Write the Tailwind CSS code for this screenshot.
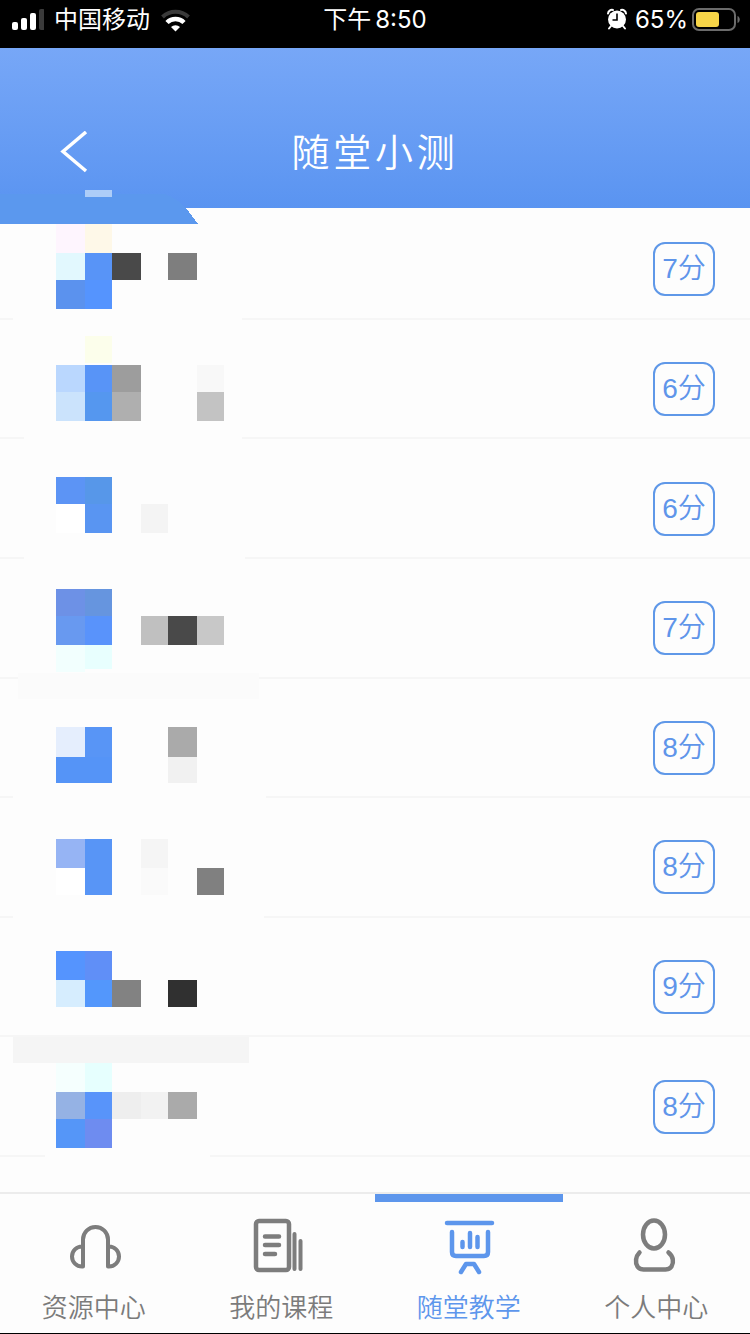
<!doctype html>
<html lang="zh-CN">

<head>
    <meta charset="utf-8">
    <meta name="viewport" content="width=device-width, initial-scale=1">
    <title>随堂小测</title>
    <script src="https://cdn.jsdelivr.net/npm/@tailwindcss/browser@4"></script>
</head>
<body class="min-h-screen flex flex-col bg-[#fdfdfd] border-b border-black font-['Liberation_Sans','Noto_Sans_CJK_SC',sans-serif] antialiased">

    <!-- status bar -->
    <div class="h-12 grid grid-cols-3 items-start bg-black text-white text-2xl leading-10 font-normal font-['Inter','Noto_Sans_CJK_SC',sans-serif]">
        <div class="flex items-center pl-3">
            <svg class="w-8 h-10 mr-2.5" viewBox="0 0 32 40" fill="#fff" aria-hidden="true">
                <rect x="0" y="22" width="6" height="8" rx="2"/>
                <rect x="9" y="18" width="6" height="12" rx="2"/>
                <rect x="18" y="13" width="6" height="17" rx="2"/>
                <rect x="27" y="9" width="6" height="21" rx="2" fill="#3a3a3a"/>
            </svg>
            <span>中国移动</span>
            <svg class="w-8 h-10 ml-2.5" viewBox="0 0 32 40" fill="none" stroke-width="4" aria-hidden="true">
                <path d="M2.500 17a19 19 0 0 1 26 0" stroke="#3a3a3a"/>
                <path d="M7 22.500a12 12 0 0 1 17 0" stroke="#fff" stroke-width="4.500"/>
                <path d="M15.500 31.500l-4.500-4.500a6.500 6.500 0 0 1 9 0z" fill="#fff"/>
            </svg>
        </div>
        <div class="flex items-center justify-center gap-1">
            <span>下午</span><span>8:50</span>
        </div>
        <div class="flex items-center justify-end pr-2.5">
            <svg class="w-6 h-10 mr-1.5" viewBox="0 0 24 40" aria-hidden="true">
                <path d="M3 13.500a4 4 0 0 1 5-3.500M21 13.500a4 4 0 0 0-5-3.500M6 26l-2 2.500M18 26l2 2.500" fill="none" stroke="#fff" stroke-width="2" stroke-linecap="round"/>
                <circle cx="12" cy="19.500" r="9" fill="#fff"/>
                <path d="M12 13.500v6.500H7.500" fill="none" stroke="#000" stroke-width="1.600"/>
            </svg>
            <span>65%</span>
            <svg class="w-12 h-10 ml-1" viewBox="0 0 48 40" aria-hidden="true">
                <rect x="1" y="9" width="42" height="21" rx="6" fill="none" stroke="#6b6b6b" stroke-width="2"/>
                <rect x="4" y="12" width="23" height="15" rx="3" fill="#f7d548"/>
                <path d="M45.500 16v7c3-1 3-6 0-7z" fill="#6b6b6b"/>
            </svg>
        </div>
    </div>

    <header class="h-40 -mb-2 pt-[50px] relative z-10 grid grid-cols-[1fr_auto_1fr] items-center bg-linear-to-b from-[#77a7f7] to-[#5a94f1] text-white">
        <button class="w-12 h-14 ml-12 flex items-center justify-center" aria-label="返回">
            <svg class="w-8 h-11" viewBox="0 0 32 44" fill="none" stroke="#fff" stroke-width="3.500" aria-hidden="true">
                <path d="M30 1L7 20.500 30 40"/>
            </svg>
        </button>
        <h1 class="text-[38px] leading-14 tracking-widest font-[350]">随堂小测</h1>
    </header>

    <main class="relative flex-1 flex flex-col pb-[35px]">
        <ul class="flex-1 flex flex-col text-[28px] leading-[50px] font-[350] text-[#5f95ea]">
            <li class="flex-1 flex items-center justify-end pt-[21px] pr-[35px] border-b-2 border-[#f6f6f6]"><span class="w-[62px] h-[54px] border-2 border-[#5f98e8] rounded-xl text-center">7分</span></li>
            <li class="flex-1 flex items-center justify-end pt-[21px] pr-[35px] border-b-2 border-[#f6f6f6]"><span class="w-[62px] h-[54px] border-2 border-[#5f98e8] rounded-xl text-center">6分</span></li>
            <li class="flex-1 flex items-center justify-end pt-[21px] pr-[35px] border-b-2 border-[#f6f6f6]"><span class="w-[62px] h-[54px] border-2 border-[#5f98e8] rounded-xl text-center">6分</span></li>
            <li class="flex-1 flex items-center justify-end pt-[21px] pr-[35px] border-b-2 border-[#f6f6f6]"><span class="w-[62px] h-[54px] border-2 border-[#5f98e8] rounded-xl text-center">7分</span></li>
            <li class="flex-1 flex items-center justify-end pt-[21px] pr-[35px] border-b-2 border-[#f6f6f6]"><span class="w-[62px] h-[54px] border-2 border-[#5f98e8] rounded-xl text-center">8分</span></li>
            <li class="flex-1 flex items-center justify-end pt-[21px] pr-[35px] border-b-2 border-[#f6f6f6]"><span class="w-[62px] h-[54px] border-2 border-[#5f98e8] rounded-xl text-center">8分</span></li>
            <li class="flex-1 flex items-center justify-end pt-[21px] pr-[35px] border-b-2 border-[#f6f6f6]"><span class="w-[62px] h-[54px] border-2 border-[#5f98e8] rounded-xl text-center">9分</span></li>
            <li class="flex-1 flex items-center justify-end pt-[21px] pr-[35px] border-b-2 border-[#f6f6f6]"><span class="w-[62px] h-[54px] border-2 border-[#5f98e8] rounded-xl text-center">8分</span></li>
        </ul>

        <!-- pixelated names -->
        <svg class="absolute top-0 left-0 z-20 w-[300px] h-[960px] overflow-visible pointer-events-none" viewBox="0 200 300 960" shape-rendering="crispEdges" aria-hidden="true">
            <path fill="#fdfdfd" d="M13 224h229v130H13zM24 354h218v100H24zM24 454h221v120H24zM18 574h241v126H18zM13 700h253v110H13zM13 810h251v120H13zM45 1120h165v40H45z"/>
            <path fill="#5b98ee" d="M0 194H165Q178 199 186 208L198 224H0z"/>
            <path fill="#adcdf8" d="M85 190h27v7H85z"/>

            <path fill="#fef5fe" d="M56 224h29v29H56z"/>
            <path fill="#fef8e8" d="M85 224h27v29H85z"/>
            <path fill="#e2f8fe" d="M56 253h29v27H56z"/>
            <path fill="#5894f7" d="M85 253h27v27H85z"/>
            <path fill="#494949" d="M112 253h29v27H112z"/>
            <path fill="#7e7e7e" d="M168 253h29v27H168z"/>
            <path fill="#5b92ee" d="M56 280h29v29H56z"/>
            <path fill="#5594fe" d="M85 280h27v29H85z"/>

            <path fill="#fcfeeb" d="M85 336h27v27H85z"/>
            <path fill="#bad7fe" d="M56 365h29v27H56z"/>
            <path fill="#5894f7" d="M85 365h27v27H85z"/>
            <path fill="#9d9d9d" d="M112 365h29v27H112z"/>
            <path fill="#f8f8f8" d="M197 365h27v27H197z"/>
            <path fill="#cbe3fc" d="M56 392h29v29H56z"/>
            <path fill="#5597ef" d="M85 392h27v29H85z"/>
            <path fill="#afafaf" d="M112 392h29v29H112z"/>
            <path fill="#c3c3c3" d="M197 392h27v29H197z"/>

            <path fill="#5c94f5" d="M56 477h29v27H56z"/>
            <path fill="#5797e9" d="M85 477h27v27H85z"/>
            <path fill="#fff" d="M56 504h29v29H56z"/>
            <path fill="#5995f2" d="M85 504h27v29H85z"/>
            <path fill="#f4f4f4" d="M141 504h27v29H141z"/>

            <path fill="#6d91e6" d="M56 589h29v27H56z"/>
            <path fill="#6695df" d="M85 589h27v27H85z"/>
            <path fill="#6899f0" d="M56 616h29v29H56z"/>
            <path fill="#5993fb" d="M85 616h27v29H85z"/>
            <path fill="#c0c0c0" d="M141 616h27v29H141z"/>
            <path fill="#494949" d="M168 616h29v29H168z"/>
            <path fill="#c8c8c8" d="M197 616h27v29H197z"/>
            <path fill="#f2fffe" d="M56 645h29v27H56z"/>
            <path fill="#e8fffe" d="M85 645h27v24H85z"/>
            <path fill="#fbfbfb" d="M18 673h241v26H18z"/>

            <path fill="#e5eefd" d="M56 727h29v30H56z"/>
            <path fill="#5895f6" d="M85 727h27v30H85z"/>
            <path fill="#aaaaaa" d="M168 727h29v30H168z"/>
            <path fill="#5594f7" d="M56 757h56v26H56z"/>
            <path fill="#f1f1f1" d="M168 757h29v26H168z"/>

            <path fill="#96b4f4" d="M56 839h29v29H56z"/>
            <path fill="#5895f6" d="M85 839h27v56H85z"/>
            <path fill="#fff" d="M56 868h29v27H56z"/>
            <path fill="#f5f5f5" d="M141 839h27v29H141z"/>
            <path fill="#fafafa" d="M141 868h27v27H141z"/>
            <path fill="#808080" d="M197 868h27v27H197z"/>

            <path fill="#5594fe" d="M56 951h29v29H56z"/>
            <path fill="#608ff7" d="M85 951h27v29H85z"/>
            <path fill="#d6edfe" d="M56 980h29v27H56z"/>
            <path fill="#5397fc" d="M85 980h27v27H85z"/>
            <path fill="#828282" d="M112 980h29v27H112z"/>
            <path fill="#303030" d="M168 980h29v27H168z"/>

            <path fill="#f5f5f5" d="M13 1037h236v26H13z"/>
            <path fill="#f5fffe" d="M56 1063h29v29H56z"/>
            <path fill="#e6fffe" d="M85 1063h27v29H85z"/>
            <path fill="#95b2e4" d="M56 1092h29v27H56z"/>
            <path fill="#5894fa" d="M85 1092h27v27H85z"/>
            <path fill="#eeeeee" d="M112 1092h29v27H112z"/>
            <path fill="#f2f2f2" d="M141 1092h27v27H141z"/>
            <path fill="#aaaaaa" d="M168 1092h29v27H168z"/>
            <path fill="#5596f8" d="M56 1119h29v29H56z"/>
            <path fill="#6e8cf0" d="M85 1119h27v29H85z"/>
        </svg>
    </main>

    <nav class="grid grid-cols-4 border-t-2 border-[#ececec] text-[26px] leading-8 font-[350] text-[#7b7b7b]">
        <a href="#" class="flex flex-col items-center gap-[13px] pt-[13px] pb-[9px] border-t-8 border-transparent">
            <svg class="w-16 h-16" viewBox="0 0 64 64" fill="none" stroke="#7d7d7d" stroke-width="4" aria-hidden="true">
                <path d="M22 51.500V24.500a12.500 12.500 0 0 1 25 0V51.500M22 31.500h-1a10 10 0 0 0 0 20h1M47 31.500h1a10 10 0 0 1 0 20h-1" transform="translate(-1 0)" stroke-linejoin="round" stroke-linecap="round"/>
            </svg>
            <span>资源中心</span>
        </a>
        <a href="#" class="flex flex-col items-center gap-[13px] pt-[13px] pb-[9px] border-t-8 border-transparent">
            <svg class="w-16 h-16" viewBox="0 0 64 64" fill="none" stroke="#7d7d7d" stroke-width="4.500" stroke-linecap="round" aria-hidden="true">
                <rect x="7" y="6" width="33" height="49" rx="3"/>
                <path d="M16 21.500h14M16 30h14M16 39h10"/>
                <path d="M45.500 19v35M51.500 26v28" stroke-width="4"/>
            </svg>
            <span>我的课程</span>
        </a>
        <a href="#" aria-current="page" class="flex flex-col items-center gap-[13px] pt-[13px] pb-[9px] border-t-8 border-[#5d96ec] text-[#5d96ec]">
            <svg class="w-16 h-16" viewBox="0 0 64 64" fill="none" stroke="#5d96ec" stroke-width="4.500" stroke-linecap="round" stroke-linejoin="round" aria-hidden="true">
                <path d="M10 8h45"/>
                <path d="M15 17v20q0 4 4 4h28q4 0 4-4V17"/>
                <path d="M25.500 27v5M33 18v14M40.500 22v10"/>
                <path d="M24 57l5-8h8l5 8"/>
            </svg>
            <span>随堂教学</span>
        </a>
        <a href="#" class="flex flex-col items-center gap-[13px] pt-[13px] pb-[9px] border-t-8 border-transparent">
            <svg class="w-16 h-16" viewBox="0 0 64 64" fill="none" stroke="#7d7d7d" stroke-width="4.500" stroke-linecap="round" aria-hidden="true">
                <ellipse cx="30" cy="19.500" rx="11" ry="14"/>
                <path d="M15.500 37.500c-4 4-4.500 10-2 14q2 3 6 3h22q4 0 6-3c2.500-4 2-10-3-14"/>
            </svg>
            <span>个人中心</span>
        </a>
    </nav>

</body>
</html>
